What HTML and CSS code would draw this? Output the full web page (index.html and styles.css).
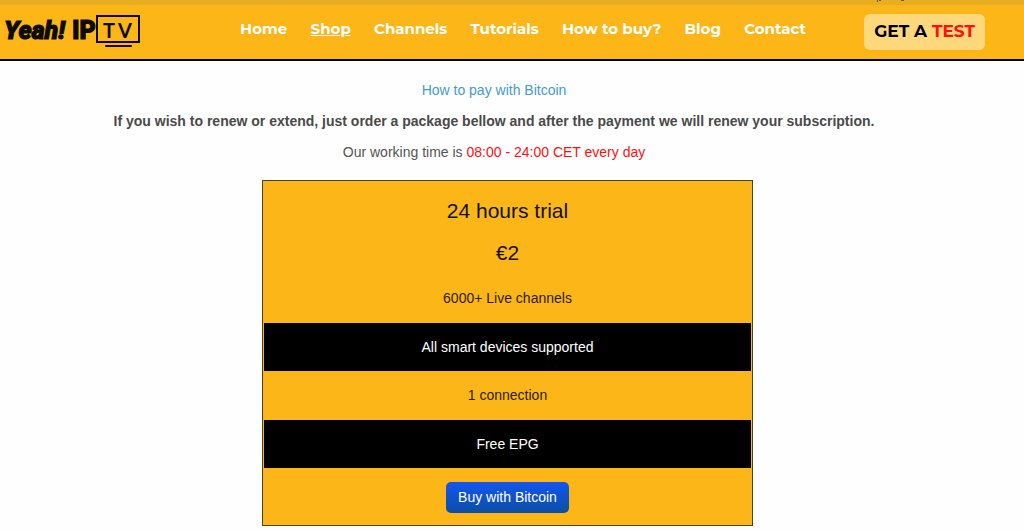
FILE: index.html
```html
<!DOCTYPE html>
<html lang="en">
<head>
    <meta charset="UTF-8">
    <meta name="viewport" content="width=device-width, initial-scale=1.0">
    <title>Yeah! IPTV - Shop</title>
    <link rel="stylesheet" href="styles.css">
</head>
<body>
    <div class="top-strip">
        <svg class="strip-marks" width="30" height="2" viewBox="0 0 30 2" aria-hidden="true">
            <path d="M0 0h1v2H0zM2 0h2v1H2zM24 0h3v1h-3z" fill="#6a5416"/>
        </svg>
    </div>

    <header class="header">
        <a href="#" class="logo">
            <span class="logo-yeah">Yeah!</span>
            <span class="logo-ip">IP</span>
            <span class="logo-screen">
                <svg width="46" height="34" viewBox="0 0 46 34" aria-hidden="true">
                    <rect x="2" y="3" width="42" height="26" fill="none" stroke="#0d0a02" stroke-width="2"/>
                    <path d="M11 33h25" stroke="#0d0a02" stroke-width="2" stroke-linecap="round"/>
                </svg>
                <span class="logo-tv">TV</span>
            </span>
        </a>

        <nav class="nav">
            <a href="#">Home</a>
            <a href="#" class="active">Shop</a>
            <a href="#">Channels</a>
            <a href="#">Tutorials</a>
            <a href="#">How to buy?</a>
            <a href="#">Blog</a>
            <a href="#">Contact</a>
        </nav>

        <a href="#" class="test-btn">GET A <span class="red">TEST</span></a>
    </header>

    <main>
        <div class="intro">
            <p><a href="#">How to pay with Bitcoin</a></p>
            <p><strong>If you wish to renew or extend, just order a package bellow and after the payment we will renew your subscription.</strong></p>
            <p>Our working time is <span class="red">08:00 - 24:00 CET every day</span></p>
        </div>

        <div class="packages">
            <section class="package">
                <h2>24 hours trial</h2>
                <div class="price">€2</div>
                <ul class="features">
                    <li>6000+ Live channels</li>
                    <li>All smart devices supported</li>
                    <li>1 connection</li>
                    <li>Free EPG</li>
                </ul>
                <button type="button" class="buy-btn">Buy with Bitcoin</button>
            </section>
        </div>
    </main>
</body>
</html>
```
FILE: styles.css
```css
* {
    margin: 0;
    padding: 0;
    box-sizing: border-box;
}

body {
    background-color: #fefefe;
    color: #555;
    font-family: Arial, "Liberation Sans", sans-serif;
    font-size: 14px;
    line-height: 20px;
}

a {
    text-decoration: none;
}

.red {
    color: #ff0f0f;
}

.top-strip {
    display: flex;
    justify-content: flex-end;
    height: 5px;
    padding-right: 117px;
    background: #e8ae22;
}

.strip-marks {
    display: block;
}

/* header */
.header {
    display: flex;
    align-items: flex-start;
    justify-content: space-between;
    height: 56px;
    padding: 8px 39px 0 4px;
    background: #fcb617;
    border-bottom: 2px solid #000;
}

.logo {
    display: flex;
    width: 138px;
    color: #0d0a02;
    font-family: Roboto, sans-serif;
    font-size: 25px;
    font-weight: 900;
    line-height: 35px;
    -webkit-text-stroke: 1px #0d0a02;
}

.logo-yeah {
    width: 68px;
    font-style: italic;
}

.logo-ip {
    width: 23px;
}

.logo-screen {
    position: relative;
    height: 34px;
}

.logo-tv {
    position: absolute;
    top: 0;
    left: 8px;
    font-family: Lato, sans-serif;
    font-size: 20px;
    font-weight: 700;
    letter-spacing: 3px;
    -webkit-text-stroke: 0;
}

.nav {
    display: flex;
    justify-content: space-between;
    width: 566px;
    margin-left: 40px;
    padding-top: 6px;
    font-family: Montserrat, Inter, sans-serif;
    font-size: 15px;
    font-weight: 700;
}

.nav a {
    color: #fff;
}

.nav a.active {
    text-decoration: underline;
}

.test-btn {
    padding: 7px 10px 9px;
    margin-top: 1px;
    color: #000;
    background: #ffd87c;
    border-radius: 6px;
    font-family: Montserrat, Inter, sans-serif;
    font-size: 17px;
    font-weight: 700;
}

/* intro */
.intro {
    padding: 19px 36px 18px 0;
    text-align: center;
}

.intro p {
    margin-bottom: 11px;
}

.intro p:last-child {
    margin-bottom: 0;
}

.intro a {
    color: #439bd3;
}

.intro strong {
    color: #4a4a4a;
}

/* packages */
.packages {
    padding-right: 9px;
}

.package {
    max-width: 491px;
    margin: 0 auto;
    padding-bottom: 12px;
    background: #fcb617;
    border: 1px solid #4a4226;
    color: #111;
    text-align: center;
}

.package h2,
.price {
    font-size: 21px;
    font-weight: normal;
    line-height: 24px;
}

.package h2 {
    padding-top: 18px;
}

.price {
    padding: 18px 0 9px;
}

.features {
    margin: 0 1px;
    list-style: none;
}

.features li {
    padding: 14px 0;
}

.features li:nth-child(odd) {
    color: #2a1f04;
    padding-bottom: 15px;
}

.features li:nth-child(even) {
    color: #fff;
    background: #000;
}

.buy-btn {
    margin-top: 14px;
    padding: 5px 12px 6px;
    color: #fff;
    background: linear-gradient(#1356f0, #0a4fa5);
    border: 0;
    border-radius: 5px;
    font: inherit;
    cursor: pointer;
}
```
